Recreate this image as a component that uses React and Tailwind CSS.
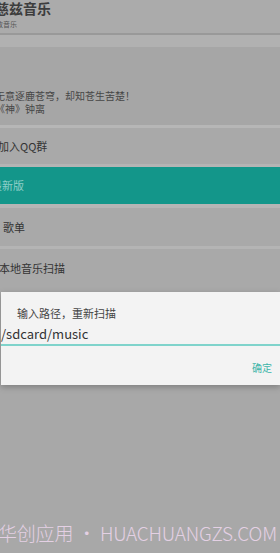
export default function App() {
  const font = { fontFamily: '"Noto Sans CJK SC", "Noto Sans", sans-serif' }
  return (
    <div style={font} className="flex h-[553px] w-[280px] flex-col overflow-hidden bg-[#a8a8a8]">
      <div className="h-[33px] bg-[#ababab]">
        <p className="-ml-[5px] text-[14px] font-bold leading-[16px] text-[#3d3d3d]">慈兹音乐</p>
        <p className="-ml-[4px] mt-[4px] text-[7px] leading-[9px] text-[#555]">致音乐</p>
      </div>
      <div className="h-[2px] bg-[#999999]" />
      <div className="h-[12px] bg-[#b1b1b1]" />
      <div className="flex h-[78px] flex-col justify-end bg-[#a6a6a6] pb-[10px]">
        <p className="-ml-[5px] text-[10px] leading-[13px] text-[#474747]">无意逐鹿苍穹，却知苍生苦楚！</p>
        <p className="-ml-[5px] text-[10px] leading-[13px] text-[#474747]">《神》钟离</p>
      </div>
      <div className="h-[3px] bg-[#b6b6b6]" />
      <div className="flex h-[36px] items-center bg-[#a9a9a9]">
        <p className="-ml-[2px] text-[11px] text-[#333]">加入QQ群</p>
      </div>
      <div className="h-[3px] bg-[#b4b4b4]" />
      <div className="flex h-[37px] items-center bg-[#13968a]">
        <p className="-ml-[9px] text-[11px] text-[#8fcfc8]">最新版</p>
      </div>
      <div className="h-[4px] bg-[#b5b5b5]" />
      <div className="flex h-[38px] items-center bg-[#a9a9a9]">
        <p className="ml-[3px] text-[11px] text-[#333]">歌单</p>
      </div>
      <div className="h-[3px] bg-[#b4b4b4]" />
      <div className="flex h-[43px] items-start bg-[#a9a9a9] pt-[11px]">
        <p className="-ml-[1px] text-[11px] text-[#333]">本地音乐扫描</p>
      </div>
      <div className="ml-[1px] flex h-[93px] flex-col bg-[#f3f3f3] shadow-[0_2px_6px_rgba(0,0,0,0.25)]">
        <p className="ml-[16px] mt-[14px] text-[11px] leading-[14px] text-[#444]">输入路径，重新扫描</p>
        <div className="mt-[6px] border-b-2 border-[#7fd3cb] pb-[2px]">
          <p className="text-[13px] leading-[16px] text-[#333]">/sdcard/music</p>
        </div>
        <p className="mr-[8px] mt-[14px] self-end text-[10px] text-[#3db5a9]">确定</p>
      </div>
      <div className="flex flex-1 flex-col justify-end pb-[6px]">
        <p className="-ml-[2px] whitespace-nowrap text-[19px] font-light tracking-[-0.2px] text-[#e4d0e4]">华创应用 • HUACHUANGZS.COM</p>
      </div>
    </div>
  )
}
